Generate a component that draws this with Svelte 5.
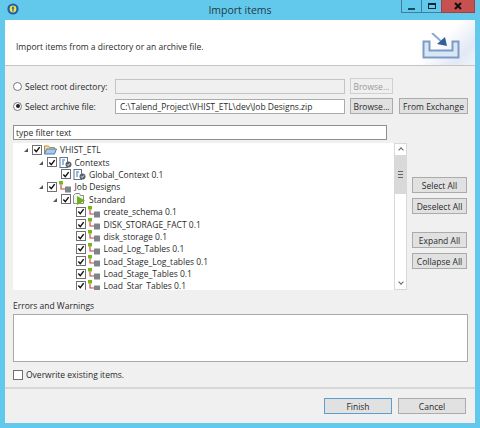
<script>
  // flat tree rows, level drives the indent
  const rows = [
    { label: 'VHIST_ETL', level: 0, icon: 'folder', open: true },
    { label: 'Contexts', level: 1, icon: 'context', open: true },
    { label: 'Global_Context 0.1', level: 2, icon: 'context' },
    { label: 'Job Designs', level: 1, icon: 'job', open: true },
    { label: 'Standard', level: 2, icon: 'standard', open: true },
    { label: 'create_schema 0.1', level: 3, icon: 'job' },
    { label: 'DISK_STORAGE_FACT 0.1', level: 3, icon: 'job' },
    { label: 'disk_storage 0.1', level: 3, icon: 'job' },
    { label: 'Load_Log_Tables 0.1', level: 3, icon: 'job' },
    { label: 'Load_Stage_Log_tables 0.1', level: 3, icon: 'job' },
    { label: 'Load_Stage_Tables 0.1', level: 3, icon: 'job' },
    { label: 'Load_Star_Tables 0.1', level: 3, icon: 'job' }
  ];
</script>

<div class="window">
  <div class="titlebar">
    <svg class="app-icon" width="14" height="14" viewBox="0 0 14 14">
      <circle cx="7" cy="7" r="5.6" fill="#1d5fa8" />
      <circle cx="7" cy="7" r="3.4" fill="#f3e04a" />
      <path d="M7 4.4v5M5.8 6h2.4" stroke="#1d5fa8" stroke-width="1.2" fill="none" />
    </svg>
    <span class="title">Import items</span>
    <div class="controls">
      <div class="ctl"><span class="min"></span></div>
      <div class="ctl"><span class="max"></span></div>
      <div class="ctl close">
        <svg width="8" height="8" viewBox="0 0 8 8"><path d="M1 1l6 6M7 1l-6 6" stroke="#111" stroke-width="2" /></svg>
      </div>
    </div>
  </div>

  <div class="dialog">
    <div class="banner">
      <p>Import items from a directory or an archive file.</p>
      <div class="banner-art">
        <svg width="38" height="26" viewBox="0 0 38 26">
          <path d="M1.5 8.5h6v9h23v-9h6v16h-35z" fill="#dbe6f4" stroke="#7c9cc8" stroke-width="2" />
          <path d="M10 0l11 10" stroke="#8fa9cc" stroke-width="2" />
          <path d="M25 13l-2-9-8 7z" fill="#2f5f9c" />
        </svg>
      </div>
    </div>

    <div class="content">
      <div class="source-row">
        <span class="radio"></span>
        <label>Select root directory:</label>
        <input class="path" disabled />
        <button disabled class="browse">Browse...</button>
      </div>
      <div class="source-row">
        <span class="radio on"></span>
        <label>Select archive file:</label>
        <input class="path" value="C:\Talend_Project\VHIST_ETL\dev\Job Designs.zip" />
        <button class="browse">Browse...</button>
        <button class="exchange">From Exchange</button>
      </div>

      <input class="filter" value="type filter text" />

      <div class="tree-area">
        <div class="tree">
          <div class="rows">
            {#each rows as row}
              <div class="row" style="padding-left: {row.level * 14.5 + 9}px">
                <span class="twisty" class:open={row.open}></span>
                <span class="check">
                  <svg width="9" height="9" viewBox="0 0 9 9"><path d="M1.5 4.5l2.2 2.4 3.8-5" stroke="#111" stroke-width="1.6" fill="none" /></svg>
                </span>
                <span class="icon">
                  {#if row.icon === 'folder'}
                    <svg width="13" height="11" viewBox="0 0 13 11">
                      <path d="M.5 10V2h4l1 1.5h5V5" fill="#f5dfa4" stroke="#b58f3c" />
                      <path d="M.5 10l2-5h10l-2 5z" fill="#a9c8ea" stroke="#4a7fb8" />
                    </svg>
                  {:else if row.icon === 'context'}
                    <svg width="13" height="12" viewBox="0 0 13 12">
                      <rect x="1" y="1.5" width="7.5" height="10" fill="#fff" stroke="#63738c" />
                      <path d="M3 4h3M3 6h2M3 8h2" stroke="#2f6fb5" stroke-width="1.1" />
                      <circle cx="9.5" cy="8.5" r="3" fill="#56606e" />
                      <path d="M8.2 8.5l1 1 1.6-2" stroke="#fff" fill="none" />
                    </svg>
                  {:else if row.icon === 'job'}
                    <svg width="13" height="12" viewBox="0 0 13 12">
                      <rect x="0" y="0" width="4" height="3.5" fill="#7cb518" />
                      <path d="M2 3.5v4.5h4" stroke="#c8402f" stroke-width="1.1" fill="none" />
                      <rect x="6" y="5.5" width="6" height="6" rx=".5" fill="#7d848c" />
                    </svg>
                  {:else}
                    <svg width="13" height="12" viewBox="0 0 13 12">
                      <path d="M.5 10.5v-8l2-2h4l1 2h3v8z" fill="#f4f4f4" stroke="#8b8b8b" />
                      <path d="M4 3l8 4.5-8 4.5z" fill="#6fb318" />
                    </svg>
                  {/if}
                </span>
                <span class="name">{row.label}</span>
              </div>
            {/each}
          </div>
          <div class="scrollbar">
            <span class="arrow up"></span>
            <div class="thumb"><span class="grip"></span></div>
            <div class="track"></div>
            <span class="arrow down"></span>
          </div>
        </div>

        <div class="side">
          <button>Select All</button>
          <button>Deselect All</button>
          <button class="gap">Expand All</button>
          <button>Collapse All</button>
        </div>
      </div>

      <div class="errors-label">Errors and Warnings</div>
      <div class="errors"></div>
      <div class="overwrite">
        <span class="box"></span>
        <span>Overwrite existing items.</span>
      </div>
    </div>

    <div class="footer">
      <button class="finish">Finish</button>
      <button>Cancel</button>
    </div>
  </div>
</div>

<style>
  :global(body) {
    margin: 0;
    background: #63c9ec;
  }

  .window {
    width: 480px;
    height: 428px;
    display: flex;
    flex-direction: column;
    background: #63c9ec;
    font-family: "Open Sans", "Noto Sans", sans-serif;
    font-size: 8.5px;
    color: #2a2a2a;
    overflow: hidden;
  }

  .titlebar {
    height: 20px;
    flex: none;
    position: relative;
    display: flex;
    justify-content: center;
    align-items: center;
  }

  .app-icon {
    position: absolute;
    left: 6px;
    top: 2px;
  }

  .title {
    font-size: 10.5px;
    color: #1f3a44;
  }

  .controls {
    position: absolute;
    right: 5px;
    top: 0;
    display: flex;
  }

  .ctl {
    width: 21px;
    height: 13px;
    box-sizing: border-box;
    border: 1px solid #3c7f99;
    border-top: none;
    margin-right: -1px;
    display: flex;
    align-items: center;
    justify-content: center;
  }

  .ctl.close {
    width: 34px;
    margin-right: 0;
    background: #c75050;
    border-color: #a04040;
  }

  .min {
    width: 7px;
    height: 2px;
    margin-top: 5px;
    background: #1d4a5c;
  }

  .max {
    width: 8px;
    height: 6px;
    box-sizing: border-box;
    border: 1px solid #0d2530;
    border-top-width: 2px;
  }

  .dialog {
    flex: 1;
    margin: 0 5px 5px;
    display: flex;
    flex-direction: column;
    background: #f0f0f0;
    min-height: 0;
  }

  .banner {
    height: 45px;
    flex: none;
    display: flex;
    justify-content: space-between;
    background: #fff;
    border-bottom: 1px solid #c4c4c4;
  }

  .banner p {
    margin: 21px 0 0 11px;
  }

  .banner-art {
    width: 62px;
    display: flex;
    align-items: flex-end;
    padding: 0 0 6px 9px;
    box-sizing: border-box;
    background: linear-gradient(135deg, #fff 45%, #e2e8f5 78%, #f0f3fa 100%);
  }

  .content {
    flex: 1;
    padding: 12px 7px 0 8px;
    min-height: 0;
  }

  .source-row {
    display: flex;
    align-items: center;
    height: 16px;
    margin-bottom: 4px;
  }

  .radio {
    width: 9px;
    height: 9px;
    flex: none;
    margin-right: 3px;
    box-sizing: border-box;
    border: 1px solid #777;
    border-radius: 50%;
    background: #fff;
    position: relative;
  }

  .radio.on::after {
    content: "";
    position: absolute;
    left: 1.5px;
    top: 1.5px;
    width: 4px;
    height: 4px;
    border-radius: 50%;
    background: #222;
  }

  .source-row label {
    width: 90px;
    flex: none;
    white-space: nowrap;
  }

  input {
    font: inherit;
    color: #2a2a2a;
    margin: 0;
    outline: none;
    box-sizing: border-box;
  }

  .path {
    width: 230px;
    height: 15px;
    flex: none;
    padding: 0 4px;
    border: 1px solid #ababab;
    background: #fff;
  }

  .path:disabled {
    background: #f0f0f0;
    border-color: #c4c4c4;
  }

  button {
    font: inherit;
    color: #2a2a2a;
    height: 16px;
    padding: 0;
    box-sizing: border-box;
    background: #e1e1e1;
    border: 1px solid #ababab;
    white-space: nowrap;
  }

  button:disabled {
    color: #9a9a9a;
    background: #efefef;
    border-color: #d0d0d0;
  }

  .browse {
    width: 43px;
    margin-left: 5px;
    flex: none;
  }

  .exchange {
    width: 69px;
    margin-left: 6px;
    flex: none;
  }

  .filter {
    display: block;
    width: 374px;
    height: 15px;
    margin-top: 11px;
    padding: 0 2px;
    border: 1px solid #8f8f8f;
    background: #fff;
  }

  .tree-area {
    display: flex;
    margin-top: 3px;
  }

  .tree {
    width: 394px;
    height: 147px;
    flex: none;
    display: flex;
    background: #fff;
    overflow: hidden;
  }

  .rows {
    flex: 1;
    padding-top: 0.5px;
    min-width: 0;
  }

  .row {
    height: 12.4px;
    display: flex;
    align-items: center;
    white-space: nowrap;
  }

  .twisty {
    width: 9px;
    height: 5px;
    flex: none;
    position: relative;
  }

  .twisty.open::after {
    content: "";
    position: absolute;
    right: 3px;
    bottom: 0;
    border-style: solid;
    border-width: 0 0 4px 4px;
    border-color: transparent transparent #555 transparent;
  }

  .check {
    width: 10px;
    height: 10px;
    flex: none;
    box-sizing: border-box;
    border: 1px solid #707070;
    background: #fff;
    display: flex;
    align-items: center;
    justify-content: center;
    margin-left: 1px;
  }

  .icon {
    width: 13px;
    height: 12px;
    flex: none;
    margin-left: 2px;
    display: flex;
    align-items: center;
  }

  .name {
    margin-left: 3px;
  }

  .scrollbar {
    width: 13px;
    flex: none;
    display: flex;
    flex-direction: column;
    box-sizing: border-box;
    border: 1px solid #d8d8d8;
    background: #fff;
  }

  .arrow {
    height: 11px;
    flex: none;
    position: relative;
  }

  .arrow::after {
    content: "";
    position: absolute;
    left: 3.5px;
    width: 3px;
    height: 3px;
    border: solid #666;
    border-width: 1px 0 0 1px;
    transform: rotate(45deg);
    top: 4px;
  }

  .arrow.down::after {
    transform: rotate(225deg);
    top: 2px;
  }

  .thumb {
    height: 39px;
    flex: none;
    background: #d9d9d9;
    display: flex;
    align-items: center;
    justify-content: center;
  }

  .grip {
    width: 5px;
    height: 5px;
    border-top: 1px solid #666;
    border-bottom: 1px solid #666;
    background: linear-gradient(#d9d9d9 40%, #666 40%, #666 60%, #d9d9d9 60%);
  }

  .track {
    flex: 1;
  }

  .side {
    margin-left: 5px;
    padding-top: 34px;
    display: flex;
    flex-direction: column;
    gap: 5px;
  }

  .side button {
    width: 55px;
    height: 16px;
  }

  .side .gap {
    margin-top: 13px;
  }

  .errors-label {
    margin-top: 9px;
    height: 13px;
    line-height: 13px;
  }

  .errors {
    width: 455px;
    height: 48px;
    margin-top: 2px;
    box-sizing: border-box;
    border: 1px solid #a9a9a9;
    background: #fff;
  }

  .overwrite {
    margin-top: 7px;
    display: flex;
    align-items: center;
    gap: 3px;
  }

  .box {
    width: 10px;
    height: 10px;
    box-sizing: border-box;
    border: 1px solid #707070;
    background: #fff;
  }

  .footer {
    flex: none;
    height: 36px;
    box-sizing: border-box;
    border-top: 2px solid #d6d6d6;
    display: flex;
    justify-content: flex-end;
    gap: 6px;
    padding: 9px 9px 0 0;
  }

  .footer button {
    width: 68px;
  }

  .finish {
    border-color: #5b9fd0;
  }
</style>
